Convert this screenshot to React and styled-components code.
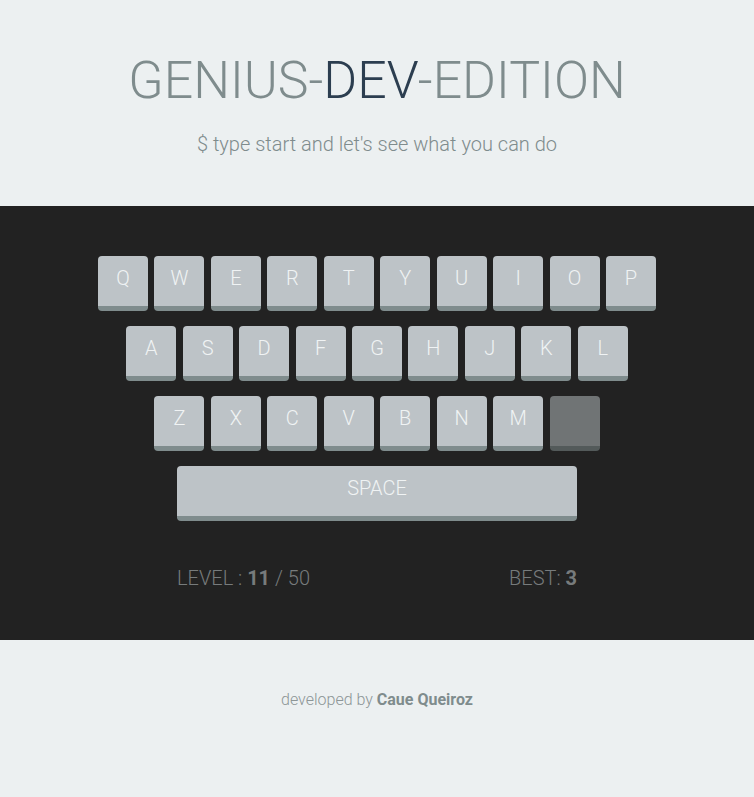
import styled, { createGlobalStyle } from "styled-components";

const GlobalStyle = createGlobalStyle`
  * { box-sizing: border-box; }
  body {
    margin: 0;
    background: #ecf0f1;
    font-family: Roboto, "Liberation Sans", sans-serif;
  }
`;

const rows = [
  ["Q", "W", "E", "R", "T", "Y", "U", "I", "O", "P"],
  ["A", "S", "D", "F", "G", "H", "J", "K", "L"],
  ["Z", "X", "C", "V", "B", "N", "M", ""],
];

function App() {
  return (
    <>
      <GlobalStyle />
      <Header>
        <Title>
          GENIUS-<Dev>DEV</Dev>-EDITION
        </Title>
        <Subtitle>$ type start and let's see what you can do</Subtitle>
      </Header>

      <Board>
        {rows.map((row, i) => (
          <Row key={i}>
            {row.map((letter, j) => (
              <Key key={j} $blank={letter === ""}>
                {letter}
              </Key>
            ))}
          </Row>
        ))}
        <Row>
          <Key $wide>SPACE</Key>
        </Row>
        <Score>
          <span>
            LEVEL : <b>11</b> / 50
          </span>
          <span>
            BEST: <b>3</b>
          </span>
        </Score>
      </Board>

      <Footer>
        developed by <b>Caue Queiroz</b>
      </Footer>
    </>
  );
}

const Header = styled.header`
  height: 206px;
  padding-top: 51px;
  text-align: center;
`;

const Title = styled.h1`
  margin: 0;
  font-size: 51.8px;
  font-weight: 300;
  line-height: 60px;
  color: #7f8c8d;
`;

const Dev = styled.span`
  color: #2c3e50;
`;

const Subtitle = styled.p`
  margin: 21px 0 0;
  font-size: 20px;
  line-height: 24px;
  font-weight: 300;
  color: #7f8c8d;
`;

const Board = styled.section`
  background: #222222;
  height: 434px;
  padding-top: 50px;
  display: flex;
  flex-direction: column;
  align-items: center;
  gap: 15px;
`;

const Row = styled.div`
  display: flex;
  justify-content: center;
  gap: 6.45px;
`;

const Key = styled.div`
  width: ${(p) => (p.$wide ? "400px" : "50px")};
  height: 55px;
  padding-bottom: 7px;
  border-radius: 4px;
  background: ${(p) => (p.$blank ? "#707475" : "#bdc3c7")};
  border-bottom: 5px solid ${(p) => (p.$blank ? "#535a5a" : "#7f8c8d")};
  color: #f0f3f4;
  font-size: 20px;
  font-weight: 300;
  display: flex;
  align-items: center;
  justify-content: center;
`;

const Score = styled.div`
  width: 400px;
  margin-top: 30px;
  display: flex;
  justify-content: space-between;
  font-size: 20px;
  font-weight: 300;
  color: #777b7c;

  b {
    font-weight: 700;
  }
`;

const Footer = styled.footer`
  padding-top: 50px;
  text-align: center;
  font-size: 16px;
  font-weight: 300;
  color: #8d9697;

  b {
    font-weight: 700;
    color: #7f8c8d;
  }
`;

export default App;
